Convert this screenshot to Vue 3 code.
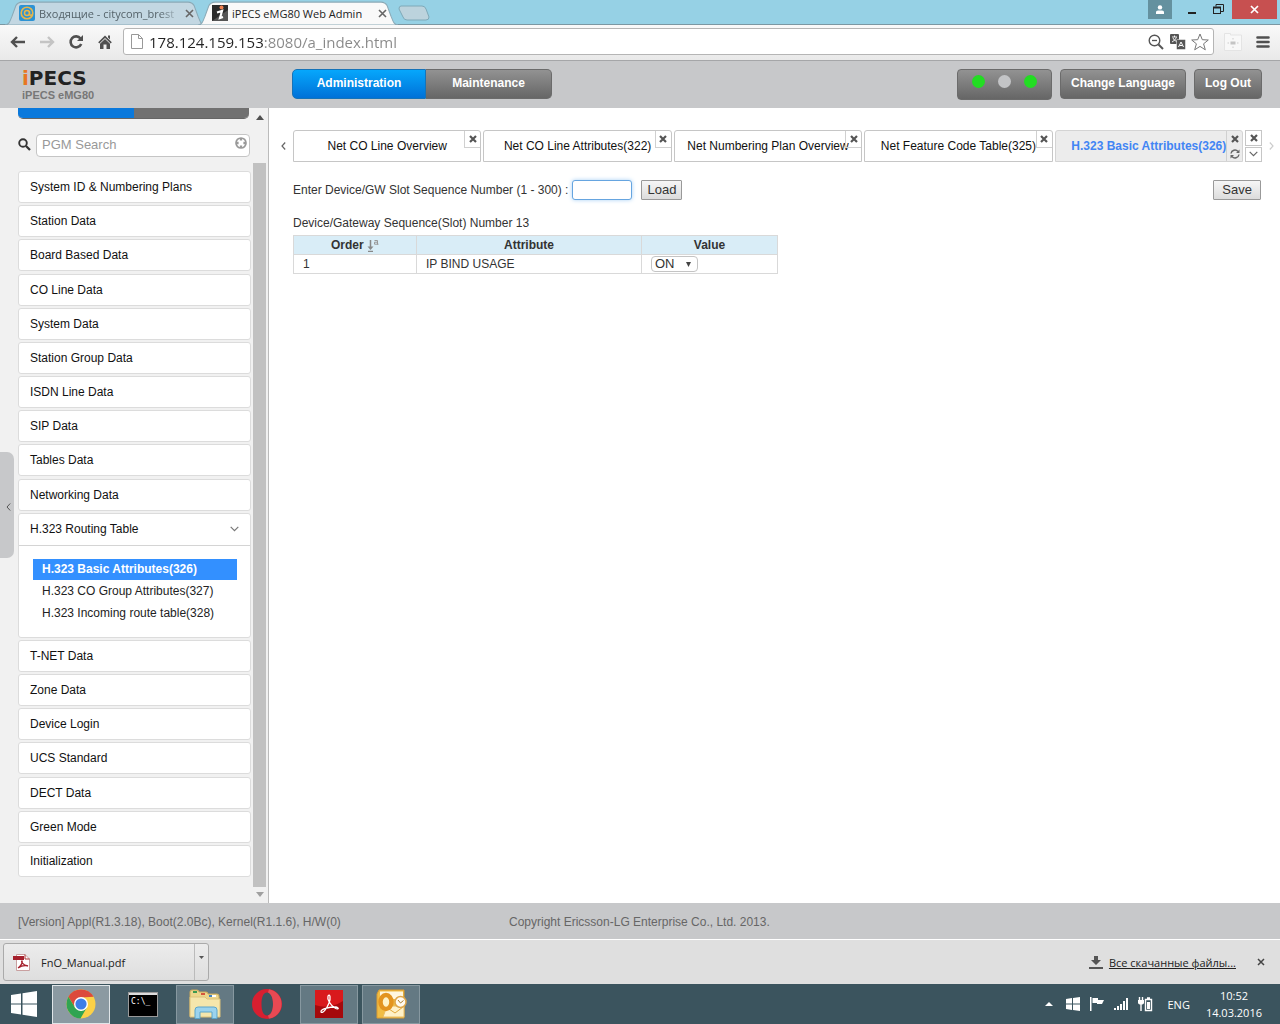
<template>
  <div class="screen">
    <!-- browser tabs -->
    <div class="tab-strip">
      <div v-for="tab in browserTabs" :key="tab.title" class="browser-tab" :class="{ current: tab.current }">
        <svg class="tab-shape" viewBox="0 0 200 22" preserveAspectRatio="none">
          <path d="M0 22C5 21 5 18 7 14L11 4Q13 1 17 1H183Q187 1 189 4L193 14C195 18 195 21 200 22Z" />
        </svg>
        <svg v-if="tab.current" class="favicon" viewBox="0 0 16 16">
          <rect width="16" height="16" fill="#2b2b2b" />
          <path d="M0 16L16 5V16Z" fill="#555" />
          <circle cx="9.500" cy="2.500" r="2" fill="#f08050" />
          <path d="M5 7.500L10 6L8 13L11 12" fill="none" stroke="#fff" stroke-width="2.200" />
        </svg>
        <svg v-else class="favicon" viewBox="0 0 16 16">
          <rect width="16" height="16" rx="2" fill="#2d93d4" />
          <circle cx="8" cy="8" r="5.800" fill="none" stroke="#e8b64a" stroke-width="1.600" />
          <circle cx="8" cy="8" r="2.500" fill="none" stroke="#e8b64a" stroke-width="1.500" />
          <path d="M10.500 6V9.500Q11.500 11 13.200 9.500" fill="none" stroke="#e8b64a" stroke-width="1.400" />
        </svg>
        <span class="tab-title">{{ tab.title }}</span>
        <button class="plain" aria-label="Close tab">
          <svg width="9" height="9" viewBox="0 0 9 9"><path d="M1 1L8 8M8 1L1 8" stroke="#666" stroke-width="1.600" /></svg>
        </button>
      </div>
      <button class="plain new-tab" aria-label="New tab">
        <svg width="32" height="16" viewBox="0 0 32 16"><path d="M3 1H24Q27 1 28 4L31 12Q31 15 28 15H9Q6 15 5 12L1 4Q1 1 3 1Z" fill="#bcd3dd" stroke="#7ea9b8" /></svg>
      </button>
      <div class="window-buttons">
        <button class="plain user" aria-label="User">
          <svg width="10" height="10" viewBox="0 0 10 10" fill="#fff"><circle cx="5" cy="2.400" r="2.200" /><path d="M1 9V7Q1 5.500 3 5.500H7Q9 5.500 9 7V9Z" /></svg>
        </button>
        <button class="plain minimize" aria-label="Minimize">
          <svg width="10" height="10" viewBox="0 0 10 10"><path d="M1 8H9" stroke="#222" stroke-width="2" /></svg>
        </button>
        <button class="plain restore" aria-label="Restore">
          <svg width="11" height="11" viewBox="0 0 11 11" fill="none" stroke="#222"><path d="M3 2.500V.5H10.500V7.500H8" /><rect x=".5" y="3.500" width="7" height="6" /><path d="M0 3.500H8" stroke-width="2" /></svg>
        </button>
        <button class="plain close" aria-label="Close">
          <svg width="9" height="9" viewBox="0 0 9 9"><path d="M1 1L8 8M8 1L1 8" stroke="#fff" stroke-width="1.700" /></svg>
        </button>
      </div>
    </div>

    <!-- browser toolbar -->
    <div class="toolbar">
      <button class="plain" aria-label="Back">
        <svg width="16" height="14" viewBox="0 0 16 14" fill="none" stroke="#505050" stroke-width="2.400"><path d="M7 2L2 7L7 12M2 7H15" /></svg>
      </button>
      <button class="plain" aria-label="Forward">
        <svg width="16" height="14" viewBox="0 0 16 14" fill="none" stroke="#c4c4c4" stroke-width="2.400"><path d="M9 2L14 7L9 12M14 7H1" /></svg>
      </button>
      <button class="plain" aria-label="Reload">
        <svg width="16" height="16" viewBox="0 0 16 16"><path d="M12.500 4.500A5.500 5.500 0 1 0 13.200 10" fill="none" stroke="#505050" stroke-width="2.600" /><path d="M15 1V7H9Z" fill="#505050" /></svg>
      </button>
      <button class="plain" aria-label="Home">
        <svg width="16" height="16" viewBox="0 0 16 16" fill="#505050"><path d="M8 1.500L14.800 8.300L13.700 9.500L8 4L2.300 9.500L1.200 8.300Z" /><path d="M11 1.500H13V5.500L11 3.500ZM3 9.800L8 5L13 9.800V15H9.500V10.500H6.500V15H3Z" /></svg>
      </button>
      <div class="address">
        <svg width="12" height="15" viewBox="0 0 12 15" fill="#fff" stroke="#999"><path d="M.5 .5H7.500L11.500 4.500V14.500H.5ZM7.500 .5V4.500H11.500" /></svg>
        <input v-model="url" class="url" type="text" aria-label="Address" />
        <svg width="16" height="16" viewBox="0 0 16 16" fill="none" stroke="#555"><circle cx="6.500" cy="6.500" r="5.300" stroke-width="1.400" /><path d="M4 6.500H9" stroke-width="1.300" /><path d="M10.500 10.500L15 15" stroke-width="2" /></svg>
        <svg width="17" height="17" viewBox="0 0 17 17"><rect x="1" y="1" width="9" height="10" rx="1" fill="#555" /><path d="M3 4H8M5.500 2.500V4M4 5Q5 8 8 8.500M7.500 4.500Q6 7.500 3 9" fill="none" stroke="#fff" stroke-width=".9" /><rect x="7.500" y="6.500" width="9" height="10" rx="1" fill="#555" stroke="#fff" stroke-width=".5" /><path d="M9.500 14L12 9L14.500 14M10.500 12.500H13.500" fill="none" stroke="#fff" /></svg>
        <svg width="18" height="18" viewBox="0 0 18 18"><path d="M9 1L11.300 6.700L17.300 7L12.600 10.800L14.300 16.800L9 13.400L3.700 16.800L5.400 10.800L.7 7L6.700 6.700Z" fill="#fff" stroke="#777" /></svg>
      </div>
      <svg class="extension" width="18" height="18" viewBox="0 0 18 18"><path d="M.5 .5H6.500V2H17.500V17.500H.5Z" fill="#f8f8f8" stroke="#e4e4e4" /><rect x="6.500" y="8.500" width="5" height="3" fill="#c4c4c4" /><path d="M9 5V6.500M9 13.500V15M3.500 10H5M13 10H14.500" stroke="#ccc" /></svg>
      <button class="plain" aria-label="Menu">
        <svg width="14" height="14" viewBox="0 0 14 14"><path d="M1.500 2.500H12.500M1.500 7H12.500M1.500 11.500H12.500" stroke="#505050" stroke-width="2.600" stroke-linecap="round" /></svg>
      </button>
    </div>

    <header class="app-header">
      <div class="brand">
        <div class="logo"><span>i</span>PECS</div>
        <div class="model">iPECS eMG80</div>
      </div>
      <nav class="modes">
        <button class="selected">Administration</button>
        <button>Maintenance</button>
      </nav>
      <div class="header-actions">
        <div class="leds"><i></i><i class="off"></i><i></i></div>
        <button class="dark-btn">Change Language</button>
        <button class="dark-btn">Log Out</button>
      </div>
    </header>

    <div class="app-body">
      <aside class="sidebar">
        <button class="collapse" aria-label="Collapse menu">
          <svg width="5" height="8" viewBox="0 0 5 8"><path d="M4.200 .5L1 4L4.200 7.500" fill="none" stroke="#555" /></svg>
        </button>
        <div class="menu">
          <div class="menu-switch"><span></span><span></span></div>
          <div class="search">
            <label for="pgm" aria-label="Search">
              <svg width="13" height="15" viewBox="0 0 13 15"><circle cx="5" cy="5" r="3.800" fill="none" stroke="#333" stroke-width="1.900" /><path d="M8 8L12 12" stroke="#333" stroke-width="2.300" /></svg>
            </label>
            <div class="search-box">
              <input id="pgm" v-model="search" type="text" placeholder="PGM Search" />
              <button class="plain clear" aria-label="Clear">
                <svg width="12" height="12" viewBox="0 0 12 12"><circle cx="6" cy="6" r="5" fill="#fff" stroke="#999" stroke-width="1.700" /><path d="M6 1V3.600M6 8.400V11M1 6H3.600M8.400 6H11" stroke="#999" stroke-width="2.400" /></svg>
              </button>
            </div>
          </div>
          <ul class="menu-list">
            <li v-for="item in menu" :key="item.name">
              <button class="menu-item">
                {{ item.name }}
                <svg v-if="item.children" width="9" height="6" viewBox="0 0 9 6"><path d="M.7 .8L4.500 4.600L8.300 .8" fill="none" stroke="#777" stroke-width="1.200" /></svg>
              </button>
              <ul v-if="item.children" class="submenu">
                <li v-for="(child, i) in item.children" :key="child">
                  <a href="#" :class="{ active: i === 0 }">{{ child }}</a>
                </li>
              </ul>
            </li>
          </ul>
        </div>
        <div class="scrollbar">
          <svg width="8" height="5" viewBox="0 0 8 5"><path d="M0 5L4 0L8 5Z" fill="#505050" /></svg>
          <div class="thumb"></div>
          <svg width="8" height="5" viewBox="0 0 8 5"><path d="M0 0H8L4 5Z" fill="#a0a0a0" /></svg>
        </div>
      </aside>

      <main class="content">
        <div class="page-tabs">
          <button class="plain arrow" aria-label="Previous tabs">
            <svg width="5" height="8" viewBox="0 0 5 8"><path d="M4.200 .5L1 4L4.200 7.500" fill="none" stroke="#666" stroke-width="1.200" /></svg>
          </button>
          <div class="page-tab-row">
            <div v-for="tab in pageTabs" :key="tab" class="page-tab" :class="{ current: tab === currentTab }">
              <button class="plain page-tab-label" @click="currentTab = tab">{{ tab }}</button>
              <div class="tab-tools">
                <button class="plain" aria-label="Close">
                  <svg width="8" height="8" viewBox="0 0 8 8"><path d="M1 1L7 7M7 1L1 7" stroke="#555" stroke-width="2.200" /></svg>
                </button>
                <button v-if="tab === currentTab" class="plain" aria-label="Refresh">
                  <svg width="10" height="10" viewBox="0 0 10 10"><path d="M1 4.500A4 4 0 0 1 8 2.500M9 5.500A4 4 0 0 1 2 7.500" fill="none" stroke="#666" stroke-width="1.400" /><path d="M9.500 .5V4H6ZM.5 9.500V6H4Z" fill="#666" /></svg>
                </button>
              </div>
            </div>
          </div>
          <div class="all-tabs">
            <button class="plain" aria-label="Close all">
              <svg width="8" height="8" viewBox="0 0 8 8"><path d="M1 1L7 7M7 1L1 7" stroke="#555" stroke-width="2.200" /></svg>
            </button>
            <button class="plain" aria-label="List tabs">
              <svg width="9" height="6" viewBox="0 0 9 6"><path d="M.7 .8L4.500 4.600L8.300 .8" fill="none" stroke="#666" stroke-width="1.200" /></svg>
            </button>
          </div>
          <button class="plain arrow next" aria-label="Next tabs">
            <svg width="5" height="8" viewBox="0 0 5 8"><path d="M.8 .5L4 4L.8 7.500" fill="none" stroke="#ccc" stroke-width="1.200" /></svg>
          </button>
        </div>

        <div class="page">
          <form class="load-form" @submit.prevent>
            <label for="slot">Enter Device/GW Slot Sequence Number (1 - 300) :</label>
            <input id="slot" v-model="slot" type="text" />
            <button class="form-btn">Load</button>
            <button class="form-btn save" type="button">Save</button>
          </form>
          <p class="caption">Device/Gateway Sequence(Slot) Number 13</p>
          <table>
            <thead>
              <tr>
                <th class="order">
                  Order
                  <svg width="12" height="13" viewBox="0 0 12 13"><path d="M3.500 1V9M1 12.500H6" stroke="#888" stroke-width="1.500" /><path d="M.5 7.500H6.500L3.500 11Z" fill="#888" /><path d="M7.500 1.500H10.500V5.500M10.500 3.200H7.500V5.200H11.500" fill="none" stroke="#999" /></svg>
                </th>
                <th class="attribute">Attribute</th>
                <th class="value">Value</th>
              </tr>
            </thead>
            <tbody>
              <tr>
                <td>1</td>
                <td>IP BIND USAGE</td>
                <td>
                  <div class="select">
                    <select v-model="bindUsage" aria-label="IP BIND USAGE">
                      <option>ON</option>
                      <option>OFF</option>
                    </select>
                    <svg width="5" height="5" viewBox="0 0 5 5"><path d="M0 0H5L2.500 5Z" fill="#444" /></svg>
                  </div>
                </td>
              </tr>
            </tbody>
          </table>
        </div>
      </main>
    </div>

    <footer class="app-footer">
      <span>[Version] Appl(R1.3.18), Boot(2.0Bc), Kernel(R1.1.6), H/W(0)</span>
      <span>Copyright Ericsson-LG Enterprise Co., Ltd. 2013.</span>
    </footer>

    <div class="downloads">
      <div class="download">
        <button class="plain file">
          <svg width="17" height="17" viewBox="0 0 17 17"><path d="M3.500 .5H12L16.500 5V16.500H3.500Z" fill="#fff" stroke="#c9a0a0" /><path d="M12 .5V5H16.500" fill="none" stroke="#a33" /><rect y="2" width="11" height="4" fill="#a5202c" /><path d="M5 14C8 12 10 8 9 7C8 7 9 11 15 12C12 11 8 12 5 14Z" fill="none" stroke="#a5202c" stroke-width="1.300" /></svg>
          FnO_Manual.pdf
        </button>
        <button class="plain more" aria-label="Download options">
          <svg width="5" height="3" viewBox="0 0 5 3"><path d="M0 0H5L2.500 3Z" fill="#555" /></svg>
        </button>
      </div>
      <a href="#" class="all-downloads">
        <svg width="14" height="13" viewBox="0 0 14 13" fill="#555"><path d="M5 0H9V4H12L7 9L2 4H5ZM0 11H14V13H0Z" /></svg>
        <span>Все скачанные файлы...</span>
      </a>
      <button class="plain close-bar" aria-label="Close downloads">
        <svg width="8" height="8" viewBox="0 0 8 8"><path d="M1 1L7 7M7 1L1 7" stroke="#444" stroke-width="1.500" /></svg>
      </button>
    </div>

    <div class="taskbar">
      <button class="plain start" aria-label="Start">
        <svg width="28" height="26" viewBox="0 0 28 26" fill="#fff"><path d="M1 4L11 2.500V12.500H1ZM12.500 2.300L27 0V12.500H12.500ZM1 13.500H11V23.500L1 22ZM12.500 13.500H27V26L12.500 23.700Z" /></svg>
      </button>
      <button class="plain task focused" aria-label="Chrome">
        <svg width="30" height="30" viewBox="0 0 30 30">
          <circle cx="15" cy="15" r="14.500" fill="#fcd147" />
          <path d="M2.400 7.800A14.500 14.500 0 0 1 27.600 7.800L15 8.500L9 18.500Z" fill="#dc4a3c" />
          <path d="M2.400 7.800A14.500 14.500 0 0 0 14.500 29.500L21 18.300L15 22L9 18.500Z" fill="#30a452" />
          <circle cx="15" cy="15" r="7" fill="#fff" /><circle cx="15" cy="15" r="5.600" fill="#3d7ee8" />
        </svg>
      </button>
      <button class="plain task" aria-label="Command prompt">
        <svg width="30" height="25" viewBox="0 0 30 25">
          <rect x=".5" y=".5" width="29" height="24" fill="#000" stroke="#999" /><path d="M1 2H29" stroke="#ddd" stroke-width="2" />
          <text x="3" y="12" font-size="8" font-family="'DejaVu Sans Mono', monospace" fill="#fff">C:\_</text>
        </svg>
      </button>
      <button class="plain task open" aria-label="Explorer">
        <svg width="34" height="30" viewBox="0 0 34 30">
          <path d="M2 5V3Q2 1 4 1H9Q11 1 11 3H18Q20 3 20 5H29Q31 5 31 7V27H2Z" fill="#ecd68c" stroke="#c9a95a" />
          <path d="M5 2H9V4H5Z" fill="#3b9a50" /><path d="M13 4H17V6H13Z" fill="#d5553d" /><path d="M21 6H28V8H21Z" fill="#fff" /><path d="M21 6H24V8H21Z" fill="#3d83c4" />
          <path d="M2 8H17L19 10H32V28H2Z" fill="#f5e6ac" stroke="#dcc27a" />
          <path d="M7 29.500V21Q7 18 10 18H26Q29 18 29 21V29.500H24V23H12V29.500Z" fill="#9bd3ee" stroke="#5aa5cc" />
        </svg>
      </button>
      <button class="plain task" aria-label="Opera">
        <svg width="32" height="32" viewBox="0 0 32 32"><path fill-rule="evenodd" fill="#d81f30" d="M16 1A15 15 0 1 0 16 31A15 15 0 1 0 16 1ZM16 4.500C20 4.500 22 10 22 16S20 27.500 16 27.500S10.500 22 10.500 16S12 4.500 16 4.500Z" /><path fill="#f4656a" opacity=".6" d="M18 1.200A15 15 0 0 1 18 30.800L17 27.400C20.500 26.500 22 21 22 16S20.500 6 17 4.600Z" /></svg>
      </button>
      <button class="plain task open" aria-label="Acrobat">
        <svg width="28" height="28" viewBox="0 0 28 28"><rect width="28" height="28" fill="#a5090c" /><path d="M0 0H28V11Q14 20 0 15Z" fill="#d9191c" /><path d="M6 22C5 19 14 17 21 17C25 18 23 20 20 18C15 15 12 9 13 6C15 3 16 8 14 13C12 18 8 24 6 22Z" fill="none" stroke="#fff" stroke-width="1.300" /></svg>
      </button>
      <button class="plain task open" aria-label="Outlook">
        <svg width="32" height="30" viewBox="0 0 32 30"><path d="M4 1H29V29H2V5Z" fill="#f0bd45" stroke="#dc9c30" /><path d="M5 2.500H28V10H5Z" fill="#fff7df" /><path d="M12 17L29 17V28H8Z" fill="#fff1c8" stroke="#e8bc62" /><path d="M11 18L20 24L28 18" fill="none" stroke="#e2a83e" /><ellipse cx="11" cy="13" rx="5.500" ry="7" fill="#fff3c8" stroke="#e39420" stroke-width="4.500" /><circle cx="25.500" cy="13" r="5.500" fill="#fffaf0" stroke="#dda64a" stroke-width="1.500" /><path d="M23 11L25.500 14L28.500 11.500" fill="none" stroke="#a87a30" /></svg>
      </button>
      <div class="tray">
        <svg width="8" height="4" viewBox="0 0 8 4"><path d="M0 4L4 0L8 4Z" fill="#fff" /></svg>
        <svg class="tray-icon" viewBox="0 0 16 16" fill="#fff"><path d="M1 3L7 2V7.500H1ZM8 2L15 1V7.500H8ZM1 8.500H7V14L1 13ZM8 8.500H15V15L8 14Z" /></svg>
        <svg class="tray-icon" viewBox="0 0 16 16" fill="#fff"><path d="M1 1H2.500V15H1ZM3.500 2H9V4H15L13 8H8V7H3.500Z" /></svg>
        <svg class="tray-icon" viewBox="0 0 16 16" fill="#fff"><path d="M1 12H3V14H1ZM4 10H6V14H4ZM7 8H9V14H7ZM10 5H12V14H10ZM13 2H15V14H13Z" /></svg>
        <svg class="tray-icon" viewBox="0 0 16 16" fill="none" stroke="#fff"><path d="M2.500 1V4M5.500 1V4M4 8V15" stroke-width="1.400" /><path d="M1 4H7V6.500Q7 8.500 4 8.500Q1 8.500 1 6.500Z" fill="#fff" stroke="none" /><path d="M8.500 3.500H14.500V14.500H8.500ZM10 2H13" stroke-width="1.400" /><rect x="10" y="6" width="3" height="7" fill="#fff" stroke="none" /></svg>
        <span>ENG</span>
        <div class="clock">10:52<br />14.03.2016</div>
      </div>
    </div>
  </div>
</template>

<script setup>
import { ref } from 'vue';

const url = ref('178.124.159.153:8080/a_index.html');
const search = ref('');
const slot = ref('');
const bindUsage = ref('ON');

const browserTabs = [
  { title: 'Входящие - citycom_brest', current: false },
  { title: 'iPECS eMG80 Web Admin', current: true }
];

const pageTabs = [
  'Net CO Line Overview',
  'Net CO Line Attributes(322)',
  'Net Numbering Plan Overview',
  'Net Feature Code Table(325)',
  'H.323 Basic Attributes(326)'
];
const currentTab = ref(pageTabs[4]);

const menu = [
  { name: 'System ID & Numbering Plans' },
  { name: 'Station Data' },
  { name: 'Board Based Data' },
  { name: 'CO Line Data' },
  { name: 'System Data' },
  { name: 'Station Group Data' },
  { name: 'ISDN Line Data' },
  { name: 'SIP Data' },
  { name: 'Tables Data' },
  { name: 'Networking Data' },
  {
    name: 'H.323 Routing Table',
    children: [
      'H.323 Basic Attributes(326)',
      'H.323 CO Group Attributes(327)',
      'H.323 Incoming route table(328)'
    ]
  },
  { name: 'T-NET Data' },
  { name: 'Zone Data' },
  { name: 'Device Login' },
  { name: 'UCS Standard' },
  { name: 'DECT Data' },
  { name: 'Green Mode' },
  { name: 'Initialization' }
];
</script>

<style>
body {
  margin: 0;
}
</style>

<style scoped>
* {
  box-sizing: border-box;
}

.screen {
  display: flex;
  flex-direction: column;
  min-height: 100vh;
  font-family: "Liberation Sans", Arial, sans-serif;
  font-size: 12px;
  color: #333;
}

button,
input,
select {
  font: inherit;
  color: inherit;
}

.plain {
  display: flex;
  align-items: center;
  justify-content: center;
  padding: 0;
  border: none;
  background: none;
}

svg {
  display: block;
  flex: none;
}

ul {
  list-style: none;
  margin: 0;
  padding: 0;
}

/* browser */
.tab-strip,
.toolbar,
.downloads,
.taskbar {
  font-family: "Open Sans", "Noto Sans", sans-serif;
  font-size: 11px;
}

.tab-strip {
  display: flex;
  height: 25px;
  padding-left: 5px;
  background: #96d1e5;
  border-bottom: 1px solid #7b97a2;
}

.browser-tab {
  position: relative;
  display: flex;
  align-items: center;
  gap: 4px;
  width: 200px;
  height: 25px;
  padding: 1px 11px 0 14px;
  margin-right: -7px;
  color: #55636a;
}

.browser-tab.current {
  z-index: 1;
  color: #222;
}

.tab-shape {
  position: absolute;
  left: 0;
  top: 1px;
  width: 100%;
  height: 24px;
  fill: #c3d7e2;
  stroke: #8aa9b6;
}

.current .tab-shape {
  fill: #f9f9f9;
}

.favicon {
  position: relative;
  width: 16px;
  height: 16px;
}

.browser-tab .plain {
  position: relative;
}

.tab-title {
  position: relative;
  flex: 1;
  overflow: hidden;
  white-space: nowrap;
}

.browser-tab:not(.current) .tab-title {
  mask-image: linear-gradient(90deg, #000 85%, transparent);
}

.new-tab {
  margin: 4px 0 0 7px;
  height: 18px;
}

.window-buttons {
  display: flex;
  height: 19px;
  margin-left: auto;
  padding-right: 3px;
}

.user {
  width: 24px;
  background: #64919f;
}

.minimize {
  width: 40px;
}

.restore {
  width: 20px;
  padding-right: 8px;
}

.close {
  width: 45px;
  background: #c75050;
}

.toolbar {
  display: flex;
  align-items: center;
  gap: 13px;
  height: 36px;
  padding: 0 10px 2px;
  background: linear-gradient(#f9f9f9, #e9e9e9);
  border-bottom: 1px solid #a5a6a8;
}

.address {
  display: flex;
  flex: 1;
  align-items: center;
  gap: 5px;
  height: 27px;
  margin-left: -3px;
  padding: 0 4px 0 7px;
  background: #fff;
  border: 1px solid #b5b5b5;
  border-radius: 3px;
}

.url {
  flex: 1;
  min-width: 0;
  padding: 0 1px;
  border: none;
  outline: none;
  font-size: 15px;
  color: transparent;
  background: linear-gradient(90deg, #222 115px, #888 115px);
  -webkit-background-clip: text;
  background-clip: text;
}

.extension {
  margin: 0 1px 0 -3px;
}

/* application header */
.app-header {
  display: flex;
  height: 47px;
  padding: 8px 18px 0 22px;
  background: #c7c8ca;
}

.brand {
  width: 270px;
}

.logo {
  font-family: "DejaVu Sans", sans-serif;
  font-size: 20px;
  line-height: 18px;
  font-weight: bold;
  color: #222;
}

.logo span {
  color: #e87722;
}

.model {
  font-size: 11px;
  line-height: 16px;
  font-weight: bold;
  color: #777;
}

.modes button,
.dark-btn,
.leds {
  height: 30px;
  padding: 0 0 2px;
  border: 1px solid #6b6b6b;
  background: linear-gradient(#929292, #666);
  color: #fff;
  font-weight: bold;
  border-radius: 4px;
}

.modes {
  display: flex;
}

.modes button {
  width: 126px;
  border-left: none;
  border-radius: 0 5px 5px 0;
}

.modes .selected {
  width: 134px;
  border: 1px solid #1673b8;
  background: linear-gradient(#06a7fc, #0071d8);
  border-radius: 5px 0 0 5px;
}

.header-actions {
  display: flex;
  gap: 8px;
  margin-left: auto;
}

.dark-btn {
  padding: 0 10px 2px;
}

.leds {
  display: flex;
  gap: 13px;
  width: 95px;
  height: 31px;
  padding: 5px 14px;
}

.leds i {
  width: 13px;
  height: 13px;
  border-radius: 50%;
  background: #22dd22;
}

.leds .off {
  background: #c3c4c6;
}

/* sidebar */
.app-body {
  display: flex;
  flex: 1;
}

.sidebar {
  position: relative;
  display: flex;
  width: 269px;
  background: #f1f1f1;
  border-right: 1px solid #bbb;
}

.collapse {
  position: absolute;
  left: 0;
  top: 344px;
  width: 14px;
  height: 106px;
  padding: 3px 0 0 6px;
  border: none;
  border-radius: 0 7px 7px 0;
  background: #c7c8ca;
}

.menu {
  display: flex;
  flex-direction: column;
  flex: 1;
  padding: 0 2px 26px 18px;
}

.menu-switch {
  display: flex;
  height: 11px;
  margin-right: 2px;
  border-bottom: 1px solid #666;
  border-radius: 0 0 5px 5px;
  overflow: hidden;
}

.menu-switch span {
  flex: 1;
  background: #717171;
}

.menu-switch span:first-child {
  background: #0a79dc;
}

.search {
  display: flex;
  align-items: center;
  gap: 5px;
  margin: 15px 1px 14px 0;
}

.search-box {
  position: relative;
  flex: 1;
}

.search-box input {
  display: block;
  width: 100%;
  height: 23px;
  padding: 0 20px 2px 5px;
  border: 1px solid #c5c5c5;
  border-radius: 4px;
  font-size: 13px;
}

.search-box input::placeholder {
  color: #999;
}

.clear {
  position: absolute;
  right: 3px;
  top: 3px;
}

.menu-list {
  display: flex;
  flex: 1;
  flex-direction: column;
  justify-content: space-between;
}

.menu-list > li {
  background: #fff;
  border: 1px solid #dcdcdc;
  border-radius: 3px;
}

.menu-item {
  display: flex;
  align-items: center;
  justify-content: space-between;
  width: 100%;
  height: 30px;
  padding: 0 11px;
  border: none;
  background: none;
  color: #111;
}

.submenu {
  display: flex;
  flex-direction: column;
  gap: 1px;
  margin-top: 1px;
  padding: 13px 13px 13px 14px;
  border-top: 1px solid #d4d4d4;
}

.submenu a {
  display: block;
  padding-left: 9px;
  line-height: 21px;
  color: #222;
  text-decoration: none;
  white-space: nowrap;
}

.submenu .active {
  background: #3390ff;
  color: #fff;
  font-weight: bold;
}

.scrollbar {
  display: flex;
  flex-direction: column;
  align-items: center;
  width: 13px;
  margin-right: 2px;
  padding: 7px 0 6px;
}

.thumb {
  flex: 1;
  width: 13px;
  margin: 43px 0 5px;
  background: #c1c1c1;
}

/* content */
.content {
  flex: 1;
  min-width: 0;
  padding-top: 22px;
  background: #fff;
}

.page-tabs {
  display: flex;
  height: 32px;
}

.arrow {
  width: 24px;
  padding-left: 5px;
}

.arrow.next {
  width: 18px;
  padding: 0;
}

.page-tab-row {
  display: flex;
  flex: 1;
  gap: 2px;
  min-width: 0;
}

.page-tab {
  position: relative;
  flex: 1;
  min-width: 0;
  border: 1px solid #c6c6c6;
  border-radius: 3px 3px 0 0;
  color: #111;
}

.page-tab.current {
  background: #ececec;
  border-color: #d4d4d4;
  color: #4285f4;
  font-weight: bold;
}

.page-tab-label {
  width: 100%;
  height: 30px;
  white-space: nowrap;
}

.tab-tools {
  position: absolute;
  right: 0;
  top: 0;
  width: 16px;
  border-left: 1px solid #d0d0d0;
}

.tab-tools .plain {
  width: 15px;
  height: 17px;
  border-bottom: 1px solid #d0d0d0;
}

.current .tab-tools .plain {
  height: 15px;
  border: none;
}

.all-tabs {
  display: flex;
  flex-direction: column;
  gap: 1px;
  margin-left: 2px;
}

.all-tabs .plain {
  flex: 1;
  width: 17px;
  border: 1px solid #c6c6c6;
}

.page {
  padding: 18px 19px 0 24px;
}

.load-form {
  display: flex;
  align-items: center;
}

.load-form input {
  width: 60px;
  height: 20px;
  margin: 0 9px 0 4px;
  border: 1px solid #66a5e0;
  border-radius: 3px;
  outline: none;
  box-shadow: 0 0 4px #a9d0f5;
}

.form-btn {
  height: 20px;
  padding: 0 5px;
  border: 1px solid #999;
  border-radius: 1px;
  background: linear-gradient(#f6f6f6, #dcdcdc);
  font-size: 13px;
  line-height: 16px;
}

.save {
  margin-left: auto;
  padding: 0 8px;
}

.caption {
  margin: 15px 0 4px;
  line-height: 16px;
}

table {
  width: 485px;
  table-layout: fixed;
  border-collapse: collapse;
}

th,
td {
  height: 19px;
  padding: 0 9px;
  border: 1px solid #d9d9d9;
  text-align: left;
  line-height: 16px;
}

th {
  background: #d9edf7;
  text-align: center;
}

.order {
  width: 123px;
}

.attribute {
  width: 225px;
}

.order svg {
  display: inline-block;
  vertical-align: -3px;
}

.select {
  position: relative;
  width: 47px;
}

.select select {
  display: block;
  width: 100%;
  height: 16px;
  padding: 0 3px;
  appearance: none;
  border: 1px solid #c4c4c4;
  border-radius: 4px;
  background: #fff;
  font-size: 13px;
  line-height: 14px;
}

.select svg {
  position: absolute;
  right: 7px;
  top: 6px;
  pointer-events: none;
}

.app-footer {
  display: grid;
  grid-template-columns: 491px 1fr;
  align-items: center;
  height: 36px;
  padding: 1px 0 0 18px;
  background: #c7c8ca;
  color: #666;
}

/* downloads and taskbar */
.downloads {
  display: flex;
  align-items: center;
  height: 45px;
  padding: 0 15px 0 3px;
  border-top: 1px solid #fff;
  background: #dfdfdf;
  color: #222;
}

.download {
  display: flex;
  width: 206px;
  height: 38px;
  border: 1px solid #aaa;
  border-radius: 3px;
  background: linear-gradient(#ececec, #dedede);
}

.file {
  flex: 1;
  justify-content: flex-start;
  gap: 11px;
  padding-left: 9px;
}

.more {
  width: 14px;
  padding-bottom: 10px;
  border-left: 1px solid #bbb;
}

.all-downloads {
  display: flex;
  align-items: center;
  gap: 6px;
  margin-left: auto;
  color: #222;
}

.close-bar {
  margin-left: 21px;
}

.taskbar {
  display: flex;
  align-items: center;
  gap: 4px;
  height: 40px;
  background: #3b545e;
  color: #fff;
}

.start {
  width: 48px;
}

.task {
  width: 58px;
  height: 39px;
}

.open {
  background: #647983;
  border: 1px solid #8798a0;
}

.focused {
  background: #8b9aa2;
  border: 1px solid #dfe5e8;
}

.tray {
  display: flex;
  align-items: center;
  gap: 8px;
  margin-left: auto;
  padding-right: 18px;
}

.tray > svg:first-child {
  margin-right: 4px;
}

.tray-icon {
  width: 16px;
  height: 16px;
}

.tray span {
  margin: 0 8px 0 6px;
}

.clock {
  line-height: 17px;
  text-align: center;
}
</style>
